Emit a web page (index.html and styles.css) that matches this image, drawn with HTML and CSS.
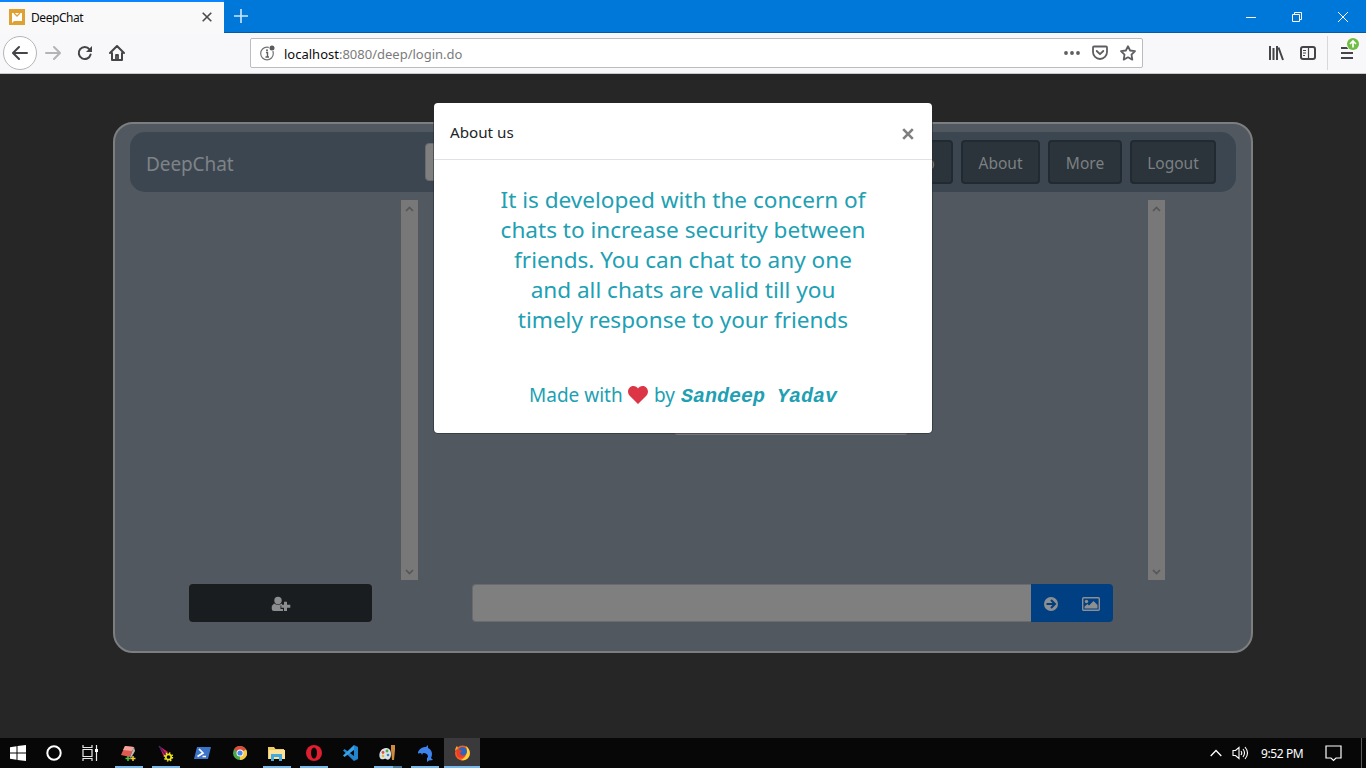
FILE: index.html
```html
<!DOCTYPE html>
<html lang="en">
<head>
<meta charset="utf-8">
<title>DeepChat</title>
<link rel="stylesheet" href="styles.css">
</head>
<body>
<div class="screen">
  <header class="tabbar">
    <div class="tab">
      <svg class="favicon" width="16" height="16" viewBox="0 0 16 16"><rect width="16" height="16" fill="#dfa132"/><path d="M3 4h10v8H5l-2 2z" fill="#fff"/><path d="M5 4l3 3 3-3" fill="none" stroke="#dfa132" stroke-width="1.3"/></svg>
      <span class="tab-title">DeepChat</span>
      <svg width="10" height="10" viewBox="0 0 10 10"><path d="M.7.7l8.6 8.6M9.3.7L.7 9.3" stroke="#4a4a4f" stroke-width="1.6"/></svg>
    </div>
    <svg class="newtab" width="14" height="14" viewBox="0 0 14 14"><path d="M7 0v14M0 7h14" stroke="#cfe6fa" stroke-width="1.6"/></svg>
    <div class="window-controls">
      <svg width="12" height="12" viewBox="0 0 12 12"><path d="M1 6.5h10" stroke="#fff"/></svg>
      <svg width="12" height="12" viewBox="0 0 12 12" fill="none" stroke="#fff"><path d="M1.500 3.500h7v7h-7zM3.500 3.500v-2h7v7h-2"/></svg>
      <svg width="12" height="12" viewBox="0 0 12 12"><path d="M1 1l10 10M11 1L1 11" stroke="#fff"/></svg>
    </div>
  </header>

  <div class="toolbar">
    <div class="back"><svg width="16" height="16" viewBox="0 0 16 16" fill="none" stroke="#454549" stroke-width="2" stroke-linecap="round" stroke-linejoin="round"><path d="M15 8H1.500M7 2L1 8l6 6"/></svg></div>
    <svg class="fwd" width="16" height="16" viewBox="0 0 16 16" fill="none" stroke="#b4b4b7" stroke-width="2" stroke-linecap="round" stroke-linejoin="round"><path d="M1 8h13.500M9 2l6 6-6 6"/></svg>
    <svg class="reload" width="16" height="16" viewBox="0 0 16 16" fill="none" stroke="#454549" stroke-width="2"><path d="M13.600 9.500A6 6 0 1 1 12.500 4.300" stroke-linecap="round"/><path d="M15 1v6H9z" fill="#454549" stroke="none"/></svg>
    <svg class="home" width="16" height="16" viewBox="0 0 16 16" fill="none" stroke="#454549" stroke-width="2" stroke-linejoin="round" stroke-linecap="round"><path d="M1 8l7-7 7 7M3 8v7h10V8"/><path d="M7 15v-5h2v5" stroke-width="1.800"/></svg>
    <div class="urlbar">
      <svg class="info" width="17" height="16" viewBox="0 0 17 16"><circle cx="8" cy="8.500" r="6.300" fill="none" stroke="#737373" stroke-width="1.200"/><path d="M7 7.500h1.500V12M6.500 12h3.500" fill="none" stroke="#606060" stroke-width="1.400"/><circle cx="8" cy="5.200" r="1" fill="#606060"/><circle cx="13" cy="3" r="3.300" fill="#fff"/><circle cx="13" cy="3" r="2.500" fill="#5b5b5f"/></svg>
      <span class="url"><b>localhost</b>:8080/deep/login.do</span>
      <svg class="dots" width="16" height="16" viewBox="0 0 16 16" fill="#5e5e62"><circle cx="2" cy="8" r="1.900"/><circle cx="8" cy="8" r="1.900"/><circle cx="14" cy="8" r="1.900"/></svg>
      <svg class="pocket" width="16" height="16" viewBox="0 0 16 16" fill="none" stroke="#5e5e62" stroke-width="1.800" stroke-linecap="round" stroke-linejoin="round"><path d="M2 1.500h12q1 0 1 1V7a7 7 0 0 1-14 0V2.500q0-1 1-1z"/><path d="M4.700 6L8 9.200 11.300 6"/></svg>
      <svg class="star" width="16" height="16" viewBox="0 0 16 16" fill="none" stroke="#5e5e62" stroke-width="1.800" stroke-linejoin="round"><path d="M8 1.200l2.100 4.300 4.900.7-3.500 3.400.8 5L8 12.300l-4.300 2.300.8-5L1 6.200l4.900-.7z"/></svg>
    </div>
    <svg class="library" width="16" height="16" viewBox="0 0 16 16" stroke="#454549" stroke-width="2"><path d="M2 1v14M5.500 3v12M9 1v14M10.500 2.500L15 15"/></svg>
    <svg class="sidebar" width="16" height="16" viewBox="0 0 16 16" fill="none" stroke="#454549" stroke-width="2"><rect x="1" y="2" width="14" height="12" rx="2"/><path d="M8.500 2v12M3 5.500h3M3 8h3M3 10.500h2" stroke-width="1.200"/></svg>
    <div class="menu">
      <svg width="20" height="26" viewBox="0 0 20 26"><path d="M2 11h10M2 16h12M2 21h12" stroke="#454549" stroke-width="2"/><circle cx="14" cy="7" r="6.800" fill="#f9f9fa"/><circle cx="14" cy="7" r="6" fill="#70bd43"/><path d="M14 10.500V4.500M11 7l3-3 3 3" fill="none" stroke="#fff" stroke-width="1.700"/></svg>
    </div>
  </div>

  <main class="page">
    <section class="app">
      <nav class="nav">
        <span class="brand">DeepChat</span>
        <div class="search"></div>
        <div class="nav-buttons">
          <a class="nav-btn help">Help</a><a class="nav-btn about">About</a><a class="nav-btn more">More</a><a class="nav-btn logout">Logout</a>
        </div>
      </nav>
      <div class="panes">
        <div class="pane friends"><div class="scroll"><svg width="9" height="6" viewBox="0 0 9 6"><path d="M1 5l3.500-3.500L8 5"/></svg><svg width="9" height="6" viewBox="0 0 9 6"><path d="M1 1l3.500 3.500L8 1"/></svg></div></div>
        <div class="pane chat"><div class="card"></div><div class="scroll"><svg width="9" height="6" viewBox="0 0 9 6"><path d="M1 5l3.500-3.500L8 5"/></svg><svg width="9" height="6" viewBox="0 0 9 6"><path d="M1 1l3.500 3.500L8 1"/></svg></div></div>
      </div>
      <div class="actions">
        <div class="add"><svg width="20" height="16" viewBox="0 0 20 16" fill="#8c8d8e"><circle cx="7" cy="4.500" r="3.700"/><path d="M3 7.500q4 2.500 8 0v2H9.500v3.500H12v2H3q-2.300 0-2.300-2.500 0-3.500 2.300-5z"/><path d="M13 5.700h3v3h3.300v3H16v3.200h-3v-3.200h-2.700v-3H13z"/></svg></div>
        <div class="message"></div>
        <div class="send">
          <svg width="14" height="14" viewBox="0 0 14 14"><circle cx="7" cy="7" r="7" fill="#8d9092"/><path d="M2.500 7H11M7 3l4 4-4 4" fill="none" stroke="#043d7d" stroke-width="2"/></svg>
          <svg width="18" height="14" viewBox="0 0 18 14"><rect x=".7" y=".7" width="16.600" height="12.600" rx="1" fill="none" stroke="#8d9092" stroke-width="1.400"/><circle cx="4.500" cy="4.500" r="1.700" fill="#8d9092"/><path d="M2.500 11.500V9.500L5.500 7l1.500 1.500L11.500 4l4 4v3.500z" fill="#8d9092"/></svg>
        </div>
      </div>
    </section>

    <div class="modal">
      <div class="modal-head"><span class="modal-title">About us</span><svg width="12" height="12" viewBox="0 0 12 12"><path d="M1.200 1.200l9.600 9.600M10.800 1.200l-9.600 9.600" stroke="#7f7f7f" stroke-width="2.600"/></svg></div>
      <div class="modal-body">
        <p class="lead"><span>It is developed with the concern of</span><span>chats to increase security between</span><span>friends. You can chat to any one</span><span>and all chats are valid till you</span><span>timely response to your friends</span></p>
        <p class="credit"><span class="made">Made with</span><svg width="20" height="18" viewBox="0 0 20 18"><path d="M10 18L1.700 9.800C-2 5.500 1 0 5.300 0 7.700 0 9 1.200 10 2.600 11 1.200 12.300 0 14.700 0 19 0 22 5.500 18.300 9.800z" fill="#dc3545"/></svg><span class="by">by</span><span class="author">Sandeep Yadav</span></p>
      </div>
    </div>
  </main>

  <footer class="taskbar">
    <div class="sys"><svg width="16" height="16" viewBox="0 0 16 16" fill="#fff"><path d="M0 2.200L6.500 1.300v6.200H0zM7.500 1.100L16 0v7.500H7.500zM0 8.500h6.500v6.200L0 13.800zM7.500 8.500H16V16l-8.500-1.100z"/></svg></div>
    <div class="sys"><svg width="16" height="16" viewBox="0 0 16 16"><circle cx="8" cy="8" r="6.700" fill="none" stroke="#fff" stroke-width="2"/></svg></div>
    <div class="sys"><svg width="17" height="16" viewBox="0 0 17 16" fill="none" stroke="#e8e8e8" stroke-width="1.200"><path d="M1 0v2.500h9V0M1 16v-2.500h9V16M1 4.500h9v7H1zM14.500 0v16"/><path d="M13 4h3v3h-3z" fill="#fff" stroke="none"/></svg></div>
    <div class="task first run"><svg width="17" height="17" viewBox="0 0 17 17"><path d="M5 1l9 1-4 10-9-2z" fill="#df5b50"/><path d="M5 1l9 1-2 4-9-1z" fill="#f0a49c"/><path d="M14 2l1 4-4 7-1-1z" fill="#b9b9b9"/><path d="M8 11v5M5.500 13.500h5" stroke="#55bd3f" stroke-width="1.500"/><path d="M13 11v5M10.500 13.500h5" stroke="#f1cd32" stroke-width="1.500"/></svg></div>
    <div class="task run"><svg width="17" height="17" viewBox="0 0 17 17"><path d="M2 1l9 6-4 5z" fill="#e71b57"/><path d="M2 1l7 9" stroke="#46226c" stroke-width="1.500"/><circle cx="11.500" cy="12" r="2.700" fill="none" stroke="#ece51d" stroke-width="1.700"/><circle cx="11.500" cy="12" r="4" fill="none" stroke="#ece51d" stroke-width="1.500" stroke-dasharray="1.500 1.640"/></svg></div>
    <div class="task"><svg width="17" height="14" viewBox="0 0 17 14"><path d="M3 1h14l-3 12H0z" fill="#3b74c8"/><path d="M5 3l4 4-5.500 3.500M8.500 10.500H12" fill="none" stroke="#fff" stroke-width="1.700"/></svg></div>
    <div class="task"><svg width="14" height="14" viewBox="0 0 14 14"><circle cx="7" cy="7" r="7" fill="#4ca84b"/><path d="M7 7L.9 3.500A7 7 0 0 1 13.100 3.500z" fill="#dc4d3e"/><path d="M7 7l6.100-3.500A7 7 0 0 1 7 14z" fill="#f6ca42"/><circle cx="7" cy="7" r="3.500" fill="#fff"/><circle cx="7" cy="7" r="2.600" fill="#4587ed"/></svg></div>
    <div class="task run"><svg width="17" height="15" viewBox="0 0 17 15"><path d="M0 1h6l1.500 2H16v10H0z" fill="#f1cb63"/><path d="M1 4h16v9H1z" fill="#fbe298"/><path d="M3 15V8h11v7h-3v-4H6v4z" fill="#44a9dc"/></svg></div>
    <div class="task run"><svg width="16" height="16" viewBox="0 0 16 16"><circle cx="8" cy="8" r="8" fill="#dd1f30"/><ellipse cx="8" cy="8" rx="3" ry="5.500" fill="#070707"/></svg></div>
    <div class="task"><svg width="17" height="16" viewBox="0 0 17 16"><path d="M12 0l4 2v12l-4 2L1 5.500 2.500 4 12 11z" fill="#2185ce"/><path d="M12 0v5L2.500 12 1 10.500z" fill="#36a2e8"/></svg></div>
    <div class="task run multi"><svg width="17" height="16" viewBox="0 0 17 16"><path d="M7 3C2 3-1 9 1 13c2 3 5 0 6 1 3 2 5-1 5-5S10 3 7 3z" fill="#d9e4e9"/><circle cx="4" cy="7.500" r="1.400" fill="#e54f42"/><circle cx="8" cy="6" r="1.400" fill="#50aa4a"/><circle cx="4" cy="11" r="1.300" fill="#e7b92f"/><circle cx="9" cy="10" r="1.300" fill="#3886c8"/><path d="M12 0h4v5l-1 10h-2l-1-10z" fill="#cf893d"/></svg></div>
    <div class="task run"><svg width="16" height="17" viewBox="0 0 16 17"><path d="M1 7C3 3 6 2 9 2l2-2v3c4 2 5 6 3 10l2 2-4 .5-2 1.500v-4l1-1C11 9 9 8 6 8l-1 2-1-2-3 .5z" fill="#3e83ed"/></svg></div>
    <div class="task run active"><svg width="17" height="16" viewBox="0 0 17 16"><circle cx="8.500" cy="8" r="7.500" fill="#f4611f"/><path d="M12 1c5 4 5 10 1 13-3 2-6 1-6 1 5-2 7-8 5-14z" fill="#ffd23a"/><path d="M1 6C1 3 3 1 3 1l1 2z" fill="#f6ae28"/><circle cx="8.500" cy="6.500" r="4.500" fill="#2c65bc"/><path d="M2 5c3-1 4 0 6 1L6 8c1 3 4 3 6 1-1 4-6 5-9 2z" fill="#ee3c2b"/></svg></div>
    <div class="tray">
      <svg width="12" height="8" viewBox="0 0 12 8"><path d="M.7 7L6 1.500 11.300 7" fill="none" stroke="#fff" stroke-width="1.300"/></svg>
      <svg class="vol" width="17" height="14" viewBox="0 0 17 14" fill="none" stroke="#fff" stroke-width="1.100"><path d="M1 4.500h2.500L7 1.500v11L3.500 9.500H1zM9 5q1.500 2 0 4M11 3q3 4 0 8M13 1q5 6 0 12"/></svg>
      <span class="clock">9:52 PM</span>
      <svg class="notice" width="17" height="17" viewBox="0 0 17 17" fill="none" stroke="#fff" stroke-width="1.200"><path d="M1 1h15v12h-5L8.500 15.500 6 13H1z"/></svg>
      <i class="peek"></i>
    </div>
  </footer>
</div>
</body>
</html>
```
FILE: styles.css
```css
* { box-sizing: border-box; }
body { margin: 0; overflow: hidden; font-family: "Noto Sans", "Open Sans", sans-serif; }
svg { display: block; flex: none; }
.screen { width: 1366px; height: 768px; display: flex; flex-direction: column; }

.tabbar { height: 33px; display: flex; align-items: center; background: #0078d9; box-shadow: inset 0 -1px #075ba4; }
.tab { width: 224px; height: 33px; padding: 0 12px 0 9px; display: flex; align-items: center; background: #f9f9fa; border-top: 2px solid #0a84ff; }
.tab-title { flex: 1; margin-left: 6px; font-size: 12px; letter-spacing: -.45px; color: #0c0c0d; }
.tab svg { margin-bottom: 1px; }
.newtab { margin-left: 10px; margin-bottom: 1px; }
.window-controls { margin-left: auto; margin-right: 17px; display: flex; gap: 34px; }

.toolbar { height: 41px; display: flex; align-items: center; background: #f8f8fa; border-bottom: 1px solid #c9c9cb; }
.back { width: 34px; height: 34px; margin-left: 3px; border: 1px solid #b5b5b7; border-radius: 50%; background: #fff; display: flex; align-items: center; justify-content: center; }
.fwd { margin-left: 8px; }
.reload { margin-left: 16px; }
.home { margin-left: 16px; }
.urlbar { width: 893px; height: 30px; margin-left: 125px; padding: 0 6px 0 8px; display: flex; align-items: center; border: 1px solid #bcbcbe; border-radius: 2px; background: #fff; }
.url { flex: 1; margin-left: 8px; padding-top: 2px; font-size: 13px; color: #7b7b7c; }
.url b { font-weight: 400; color: #0c0c0d; }
.pocket, .star { margin-left: 12px; }
.library { margin-left: 125px; }
.sidebar { margin-left: 16px; }
.menu { height: 34px; margin-left: 11px; padding: 1px 0 0 11px; border-left: 1px solid #d8d8da; }

.page { position: relative; height: 664px; padding: 48px 113px 0; background: #262626; }
.app { height: 531px; padding: 8px 15px 0; border: 2px solid #7c7e7f; border-radius: 20px; background: #51585f; }
.nav { height: 60px; padding: 0 20px 0 16px; display: flex; align-items: center; border-radius: 15px; background: #3c4651; }
.brand { width: 279px; font-size: 19px; letter-spacing: -.1px; color: #7f8386; padding-top: 3px; }
.search { width: 300px; height: 38px; background: #7f7f7f; border: 1px solid #686c70; border-radius: 4px; }
.nav-buttons { margin-left: auto; display: flex; gap: 8px; }
.nav-btn { height: 44px; display: flex; align-items: center; justify-content: center; padding-top: 2px; border: 2px solid #212a30; border-radius: 4px; background: #2b343a; color: #7c8082; font-size: 15.5px; }
.help { width: 70px; }
.about { width: 79px; }
.more { width: 74px; }
.logout { width: 86px; }
.panes { display: flex; height: 380px; margin-top: 8px; }
.pane { display: flex; justify-content: flex-end; }
.friends { width: 288px; }
.chat { width: 747px; }
.card { width: 234px; height: 235px; margin-right: 240px; background: #747678; border-radius: 4px; }
.scroll { width: 17px; height: 380px; padding: 6px 4px 5px; display: flex; flex-direction: column; justify-content: space-between; background: #787878; fill: none; stroke: #565656; stroke-width: 1.7px; }
.actions { display: flex; height: 38px; margin: 4px 0 0 59px; }
.add { width: 183px; border-radius: 4px; background: #1a1d20; display: flex; align-items: center; justify-content: center; padding-top: 2px; }
.message { width: 559px; margin-left: 100px; background: #7f7f7f; border: 1px solid #686c70; border-right: 0; border-radius: 4px 0 0 4px; }
.send { width: 82px; padding: 2px 0 0 13px; display: flex; align-items: center; gap: 24px; border-radius: 0 4px 4px 0; background: #003f82; }

.modal { position: absolute; left: 434px; top: 29px; width: 498px; height: 330px; border-radius: 4px; background: #fff; box-shadow: 0 0 0 1px #23262980; }
.modal-head { height: 57px; padding: 4px 18px 0 16px; display: flex; align-items: center; justify-content: space-between; border-bottom: 1px solid #dee2e6; }
.modal-title { font-size: 15.2px; color: #212529; padding-bottom: 2px; }
.modal-head svg { margin-top: 1px; }
.modal-body { padding-top: 25px; color: #219fb3; }
.lead { margin: 0; display: flex; flex-direction: column; align-items: center; font-size: 22.6px; letter-spacing: -.02px; line-height: 30px; white-space: nowrap; }
.credit { display: flex; align-items: center; margin: 43px 0 0; padding-left: 95px; font-size: 19px; line-height: 30px; white-space: nowrap; }
.made { width: 99px; }
.by { margin-left: 6px; width: 27px; }
.author { padding-top: 4px; font: italic bold 20px/30px "Liberation Mono", monospace; }

.taskbar { height: 30px; display: flex; background: #070707; }
.sys { width: 36px; display: flex; align-items: center; justify-content: center; }
.task { width: 37px; display: flex; align-items: center; justify-content: center; }
.first { margin-left: 2px; }
.run { background: linear-gradient(#76b9ed, #76b9ed) center bottom / 28px 2px no-repeat; }
.multi { background: linear-gradient(90deg, #76b9ed 19px, #48789c 19px) center bottom / 28px 2px no-repeat; }
.active { width: 36px; margin-left: 1px; background-color: #3a3a3c; background-size: 36px 2px; }
.tray { margin-left: auto; display: flex; align-items: center; color: #fff; }
.vol { margin-left: 10px; }
.clock { margin-left: 12px; width: 43px; font-size: 12px; letter-spacing: -.4px; white-space: nowrap; }
.notice { margin-left: 21px; }
.peek { width: 1px; height: 30px; margin: 0 4px 0 19px; background: #5a5a5a; }
```
